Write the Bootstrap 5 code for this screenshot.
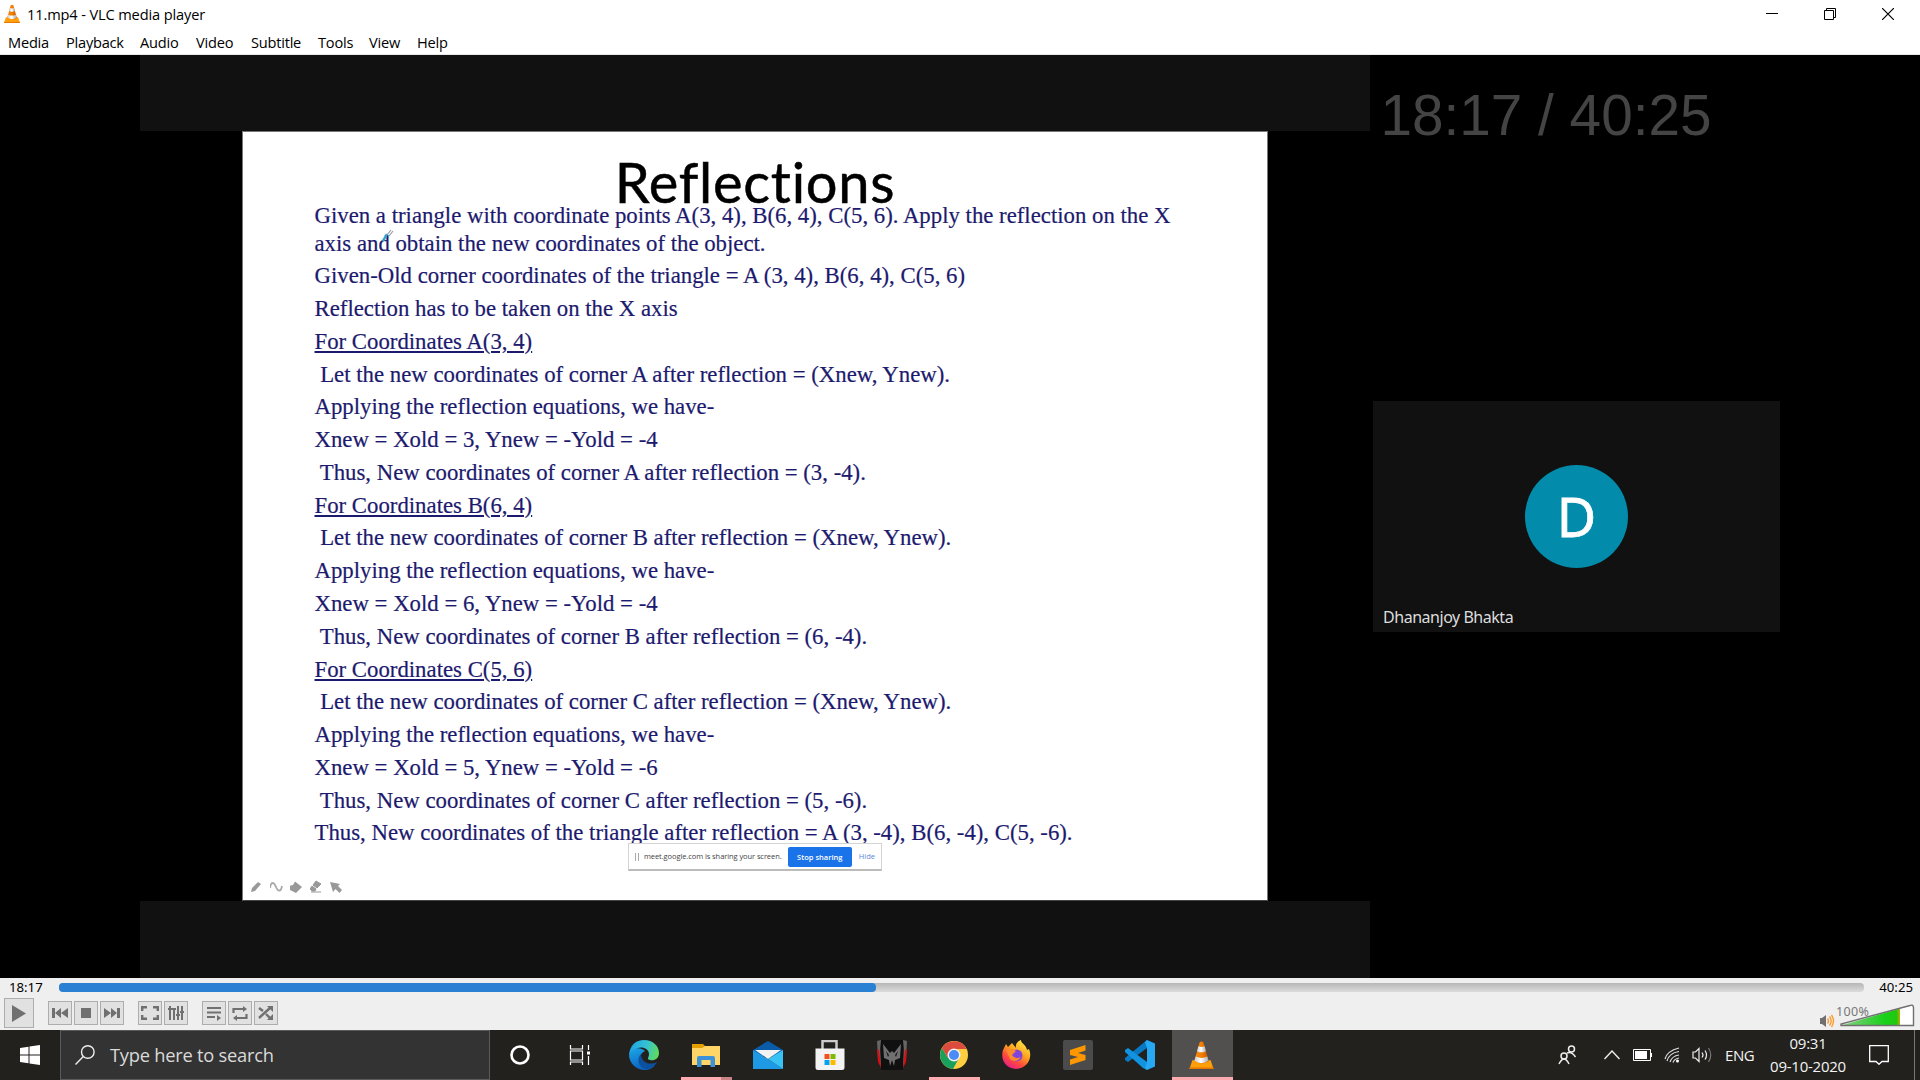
<!DOCTYPE html>
<html lang="en">
<head>
<meta charset="utf-8">
<title>11.mp4 - VLC media player</title>
<link href="https://cdn.jsdelivr.net/npm/bootstrap@5.3.0/dist/css/bootstrap.min.css" rel="stylesheet">
<style>
body{width:1920px;height:1080px;overflow:hidden;background:#fff;color:#000;font-family:"Open Sans","Noto Sans",sans-serif;font-size:15px}
svg{display:block;flex:none}
.titlebar{height:28px;padding-left:3px}
.titlebar .caption{margin-left:6px;font-size:14.6px;letter-spacing:-.13px;line-height:28px}
.win-controls{gap:46px;padding-right:26px}
.menubar{height:27px;border-bottom:1px solid #e9e9e9;padding-left:8px}
.menubar a{color:#000;text-decoration:none;font-size:14.6px;line-height:29px;height:26px;letter-spacing:-.22px;white-space:nowrap}
.video{height:923px;background:#000}
.share{width:1230px;margin-left:140px}
.band{height:76px;background:#111}
.band.lower{height:77px}
.slide{width:1026px;height:770px;margin-left:102px;background:#fff;border:1px solid #777;border-bottom-color:#444;overflow:hidden}
.slide-title{font-family:Lato,Carlito,sans-serif;font-size:56px;line-height:70px;height:70px;text-align:center;margin-top:15px;font-variant-ligatures:none;letter-spacing:.75px;-webkit-text-stroke:.5px #000}
.notes{font-family:"Liberation Serif",serif;font-size:22.79px;color:#1c1a6e;-webkit-text-stroke:.2px #1c1a6e;padding-left:71.5px;margin-top:-14.7px;white-space:pre}
.notes p{margin:0;line-height:32.77px;height:32.77px}
.notes p.intro{line-height:27.5px;height:58px}
.cursor-pen{left:382px;top:229px}
.sharebar{left:628px;top:843px;width:254px;height:28px;background:#fff;border:1px solid #d4d4d4;border-bottom:2px solid #bbb;font-size:7.5px;color:#444;padding:0 6px}
.sharebar .grip{width:4px;height:8px;border-left:1px solid #aaa;border-right:1px solid #aaa}
.sharebar .stop{width:65px;height:20px;background:#1a73e8;color:#fff;border-radius:2px;font-weight:600;line-height:20px;text-align:center}
.tools{left:250px;top:880px;gap:7px}
.side{padding-left:3px}
.osd{font-family:"Liberation Sans",sans-serif;font-size:56.7px;line-height:64px;color:#444;margin:29px 0 0 7.500px;height:64px;white-space:nowrap}
.tile{width:407px;height:231px;background:#111;margin-top:253px}
.avatar{width:103px;height:103px;border-radius:50%;background:#028baa;color:#fff;font-family:"Noto Sans",sans-serif;font-size:54px;line-height:102px;text-align:center;left:152px;top:64px;-webkit-text-stroke:.8px #fff}
.peer{left:10px;bottom:3px;color:#ddd;font-family:"Noto Sans",sans-serif;font-size:16px;line-height:24px;white-space:nowrap;letter-spacing:-.47px}
.controls{height:52px;background:#efefef;font-size:12.5px}
.seekrow{height:18px;padding:0 7px 0 9px}
.seekrow span{width:50px;line-height:18px;font-family:"Noto Sans",sans-serif;font-size:13.2px}
.seek{height:9px;background:linear-gradient(#b6b6b6,#dcdcdc);border-radius:4px;width:1805px;overflow:hidden;flex:none}
.seek div{height:100%;background:#2a80d2;border-radius:0 4px 4px 0}
.buttons{height:34px;padding-left:4px}
.ctl{width:24px;height:24px;background:#e1e1e1;border:1px solid #adadad;display:flex;align-items:center;justify-content:center;margin-right:2px}
.ctl.big{width:30px;height:30px;margin-right:14px}
.ctl.gap-after{margin-right:14px}
.volume{width:100px;height:34px}
.taskbar{height:50px;background:#22211e;color:#f4f4f4}
.start{width:60px}
.searchbox{width:430px;background:#333;border:1px solid #5a5a5a;padding-left:14px;color:#dadada}
.searchbox span{font-size:18.3px;letter-spacing:-.24px;margin-left:15px}
.task{width:60px;height:50px;display:flex;align-items:center;justify-content:center}
.app{width:62px;height:50px;display:flex;align-items:center;justify-content:center;position:relative}
.app.open::after{content:"";position:absolute;left:6px;width:51px;bottom:0;height:3px;background:#ffabb0}
.app.multi::after{background:linear-gradient(90deg,#ffabb0 40px,#c98488 40px)}
.app.active{background:#51504e;width:61px;margin-left:1px}
.app.active::after{left:0;width:61px}
.clock{width:80px;text-align:center;font-size:15px;line-height:23px;letter-spacing:-.25px;white-space:nowrap}
</style>
</head>
<body class="d-flex flex-column">
<svg width="0" height="0" class="position-absolute">
  <defs>
    <linearGradient id="coneG" x1="0" x2="1"><stop offset="0" stop-color="#f58a1c"/><stop offset=".5" stop-color="#f57f00"/><stop offset="1" stop-color="#c95400"/></linearGradient>
    <linearGradient id="wh" x1="0" x2="1"><stop offset="0" stop-color="#ccc"/><stop offset=".45" stop-color="#fff"/><stop offset="1" stop-color="#aaa"/></linearGradient>
    <symbol id="cone" viewBox="0 0 28 30">
      <path d="M4.500 20H23.500L26.500 29H1.500Z" fill="#ff9f0a"/><path d="M1.800 27.500H26.200L26.500 29H1.500Z" fill="#e87700"/>
      <path d="M12 1.500Q14-.5 16 1.500L21.500 21Q14 26 6.500 21Z" fill="url(#coneG)"/>
      <path d="M10.800 5.500Q14 7 17.200 5.500L18.600 10.500Q14 13 9.400 10.500Z" fill="url(#wh)"/>
      <path d="M8 16Q14 19 20 16L21.300 20.500Q14 25.500 6.700 20.500Z" fill="url(#wh)"/>
    </symbol>
    <linearGradient id="edgeA" x1="0" y1=".3" x2="1" y2=".5"><stop offset="0" stop-color="#1da4e4"/><stop offset=".55" stop-color="#35c1d5"/><stop offset="1" stop-color="#5fdb5b"/></linearGradient>
    <linearGradient id="edgeB" x1="0" y1="0" x2=".4" y2="1"><stop offset="0" stop-color="#1ca7e8"/><stop offset="1" stop-color="#0b62bd"/></linearGradient>
    <linearGradient id="ff" x1=".8" y1="0" x2=".2" y2="1"><stop offset="0" stop-color="#fff04a"/><stop offset=".4" stop-color="#ffa51f"/><stop offset=".7" stop-color="#ff473f"/><stop offset="1" stop-color="#e01795"/></linearGradient>
    <linearGradient id="vol" x1="0" x2="1"><stop offset="0" stop-color="#8ad08a"/><stop offset=".75" stop-color="#18d018"/><stop offset=".94" stop-color="#22c810"/><stop offset="1" stop-color="#b5b000"/></linearGradient>
  </defs>
</svg>

<header class="titlebar d-flex align-items-center">
  <svg width="18" height="20"><use href="#cone"/></svg>
  <span class="caption">11.mp4 - VLC media player</span>
  <div class="win-controls d-flex align-items-center ms-auto">
    <svg width="12" height="12"><path d="M0 5.500H12" stroke="#000"/></svg>
    <svg width="12" height="12" fill="none" stroke="#000"><path d="M.5 2.500H9.500V11.500H.5ZM2.500 2.500V.5H11.500V9.500H9.500"/></svg>
    <svg width="12" height="12"><path d="M0 0L12 12M12 0L0 12" stroke="#000" stroke-width="1.200"/></svg>
  </div>
</header>
<nav class="menubar d-flex">
  <a href="#" style="width:58px">Media</a><a href="#" style="width:74px">Playback</a><a href="#" style="width:56px">Audio</a><a href="#" style="width:55px">Video</a><a href="#" style="width:67px">Subtitle</a><a href="#" style="width:51px">Tools</a><a href="#" style="width:48px">View</a><a href="#">Help</a>
</nav>

<main class="video d-flex">
  <section class="share">
    <div class="band"></div>
    <div class="slide">
      <div class="slide-title">Reflections</div>
      <div class="notes"><p class="intro">Given a triangle with coordinate points A(3, 4), B(6, 4), C(5, 6). Apply the reflection on the X
axis and obtain the new coordinates of the object.</p><p>Given-Old corner coordinates of the triangle = A (3, 4), B(6, 4), C(5, 6)</p><p>Reflection has to be taken on the X axis</p><p><u>For Coordinates A(3, 4)</u></p><p> Let the new coordinates of corner A after reflection = (Xnew, Ynew).</p><p>Applying the reflection equations, we have-</p><p>Xnew = Xold = 3, Ynew = -Yold = -4</p><p> Thus, New coordinates of corner A after reflection = (3, -4).</p><p><u>For Coordinates B(6, 4)</u></p><p> Let the new coordinates of corner B after reflection = (Xnew, Ynew).</p><p>Applying the reflection equations, we have-</p><p>Xnew = Xold = 6, Ynew = -Yold = -4</p><p> Thus, New coordinates of corner B after reflection = (6, -4).</p><p><u>For Coordinates C(5, 6)</u></p><p> Let the new coordinates of corner C after reflection = (Xnew, Ynew).</p><p>Applying the reflection equations, we have-</p><p>Xnew = Xold = 5, Ynew = -Yold = -6</p><p> Thus, New coordinates of corner C after reflection = (5, -6).</p><p>Thus, New coordinates of the triangle after reflection = A (3, -4), B(6, -4), C(5, -6).</p></div>
    </div>
    <div class="band lower"></div>
  </section>
  <aside class="side">
    <div class="osd">18:17 / 40:25</div>
    <div class="tile position-relative">
      <div class="avatar position-absolute">D</div>
      <div class="peer position-absolute">Dhananjoy Bhakta</div>
    </div>
  </aside>
</main>
<svg class="cursor-pen position-absolute" width="12" height="13" fill="none"><path d="M1 12L5 5" stroke="#2fa6cf" stroke-width="2.500"/><path d="M5 6L9 1M7 7L11 2" stroke="#99a" stroke-width="1.200"/></svg>
<div class="sharebar position-absolute d-flex align-items-center">
  <div class="grip"></div><span style="margin-left:5px;width:146px;white-space:nowrap;letter-spacing:-.08px">meet.google.com is sharing your screen.</span>
  <div class="stop">Stop sharing</div><span style="margin-left:7px;color:#5b86d6">Hide</span>
</div>
<div class="tools position-absolute d-flex">
  <svg width="13" height="14" viewBox="0 0 13 14"><path d="M1 12L2 8L8 2L11 4L5 11Z" fill="#999"/></svg>
  <svg width="13" height="14" viewBox="0 0 13 14"><path d="M0 8C1 1 4 2 6 7S11 12 12 6" fill="none" stroke="#aaa" stroke-width="1.800"/></svg>
  <svg width="13" height="14" viewBox="0 0 13 14"><path d="M-1 6L3 5L5 1.500L12 7L10 9L6 13L0 10Z" fill="#999"/></svg>
  <svg width="13" height="14" viewBox="0 0 13 14"><path d="M3 5L6 1L11 4L7 8ZM2 6L6 9L5 11H2L0 9ZM1 12H11" fill="#999" stroke="#999"/></svg>
  <svg width="13" height="14" viewBox="0 0 13 14"><path d="M0 2L10 4L8 6L12 10L9.500 13L5.500 9L3 12Z" fill="#999"/></svg>
</div>

<section class="controls">
  <div class="seekrow d-flex align-items-center">
    <span>18:17</span><div class="seek"><div style="width:45.3%"></div></div><span class="text-end ms-auto">40:25</span>
  </div>
  <div class="buttons d-flex align-items-center">
    <div class="ctl big"><svg width="14" height="17"><path d="M0 0L14 8.500L0 17Z" fill="#707070"/></svg></div>
    <div class="ctl"><svg width="16" height="12" fill="#707070"><path d="M0 1H3V11H0ZM3 6L9 1V11ZM9 6L16 1V11Z"/></svg></div>
    <div class="ctl"><svg width="10" height="10"><path d="M0 0H10V10H0Z" fill="#707070"/></svg></div>
    <div class="ctl gap-after"><svg width="16" height="12" fill="#707070"><path d="M16 1H13V11H16ZM13 6L7 1V11ZM7 6L0 1V11Z"/></svg></div>
    <div class="ctl"><svg width="18" height="14" fill="none" stroke="#707070" stroke-width="2.400"><path d="M1.200 5V1.200H6M12 1.200H16.800V5M16.800 9V12.800H12M6 12.800H1.200V9"/></svg></div>
    <div class="ctl gap-after"><svg width="16" height="14" fill="none" stroke="#707070" stroke-width="2"><path d="M2 0V14M6 3V14M10 0V14M14 0V14M0 3H4M4 3H8M8 9H12M12 6H16"/></svg></div>
    <div class="ctl"><svg width="16" height="15" fill="none" stroke="#707070" stroke-width="2"><path d="M1 2H15M1 6.500H15M1 11H9" /><path d="M11 9V15L15 12Z" fill="#707070" stroke="none"/></svg></div>
    <div class="ctl"><svg width="16" height="15" fill="none" stroke="#707070" stroke-width="2.200"><path d="M1.500 7V3H11M14.500 8V12H5"/><path d="M11 0L15 3L11 6ZM5 9L1 12L5 15Z" fill="#707070" stroke="none"/></svg></div>
    <div class="ctl"><svg width="16" height="14" fill="none" stroke="#707070" stroke-width="2.400"><path d="M1 2L5 5M8 8L12 12M1 12L12 2"/><path d="M9 0H15V6ZM15 8V14H9Z" fill="#707070" stroke="none"/></svg></div>
    <svg class="volume ms-auto" viewBox="0 0 100 34" font-family="Noto Sans">
      <path d="M0 22H2L6 19V31L2 28H0Z" fill="#707070"/><path d="M7.500 22.500Q9.500 25 7.500 27.500M9.500 20.500Q13 25 9.500 29.500M11.500 19Q15.500 25 11.500 31" fill="none" stroke="#ff9b2e" stroke-width="1.400"/>
      <path d="M21 29.500L80 12.500V29.500Z" fill="url(#vol)"/><path d="M80 12.500L94 9V29.500H80Z" fill="#fff"/>
      <path d="M21 29.500V28L90 9.500Q93.500 8 93.500 12V29.500Z" fill="none" stroke="#707070" stroke-width="1.400"/>
      <text x="16" y="19.500" font-size="12.500" fill="#777" textLength="33">100%</text>
    </svg>
  </div>
</section>

<footer class="taskbar d-flex">
  <div class="start d-flex align-items-center justify-content-center"><svg width="20" height="20" fill="#fff"><path d="M0 3L8.500 1.800V9.400H0ZM9.500 1.600L20 0V9.400H9.500ZM0 10.400H8.500V18.200L0 17ZM9.500 10.400H20V20L9.500 18.400Z"/></svg></div>
  <div class="searchbox d-flex align-items-center"><svg width="20" height="20" fill="none" stroke="#eee" stroke-width="1.400"><circle cx="12.800" cy="7" r="6.300"/><path d="M8.300 11.500L.5 19.500"/></svg><span>Type here to search</span></div>
  <div class="task"><svg width="20" height="20"><circle cx="10" cy="10" r="8.500" fill="none" stroke="#fff" stroke-width="2.600"/></svg></div>
  <div class="task" style="width:63px"><svg style="margin-right:3px" width="22" height="20" fill="none" stroke="#fff" stroke-width="1.200"><path d="M1.500 0V4H13.500V0M1.500 6H13.500V15H1.500ZM1.500 20V17H13.500V20M19.500 0V5M19.500 11V20"/><path d="M18 6.500H21V9.500H18Z" fill="#fff" stroke="none"/></svg></div>
  <div class="app"><svg width="30" height="30"><path d="M0 15C1 5 7 0 15 0C24 0 30 6 30 13C30 19 25 21 21 20C17 19 20 18 20 14C20 8 11 5 5 10Z" fill="url(#edgeA)"/><path d="M0 16C1 8 11 6 16 11C11 13 9 20 13 25C17 29 23 27 26 25C20 34 2 31 0 16Z" fill="url(#edgeB)"/><path d="M12 14C7 19 10 29 18 29C22 29 26 26 28 22C20 26 12 22 12 14Z" fill="#0c50a0"/></svg></div>
  <div class="app open multi"><svg width="28" height="24"><path d="M0 1H11L14 4H28V22H0Z" fill="#e5a000"/><path d="M0 5H10L13 3H28V22H0Z" fill="#ffd567"/><path d="M5 24V15Q5 13 7 13H21Q23 13 23 15V24H18.500V17H9.500V24Z" fill="#3e92d8"/></svg></div>
  <div class="app"><svg width="30" height="28"><path d="M0 9L15 0L30 9V15H0Z" fill="#0a5ca8"/><path d="M0 9L15 18L30 28H0Z" fill="#1e9ae4"/><path d="M30 9V28L15 18Z" fill="#38c2f5"/><path d="M2 9H28L15 18Z" fill="#f2f2f2"/></svg></div>
  <div class="app"><svg width="30" height="30"><path d="M7.500 10V1H21.500V10" fill="none" stroke="#ccc" stroke-width="2.500"/><path d="M.5 8.500H29.500V28Q29.500 30 27 30H3Q.5 30 .5 28Z" fill="#f3f3f3"/><path d="M9.500 14H14.500V19H9.500Z" fill="#f25022"/><path d="M15.500 14H20.500V19H15.500Z" fill="#7fba00"/><path d="M9.500 20H14.500V25H9.500Z" fill="#00a4ef"/><path d="M15.500 20H20.500V25H15.500Z" fill="#ffb900"/></svg></div>
  <div class="app"><svg width="30" height="30"><path d="M4 0H26V30H4Z" fill="#101010"/><path d="M0 1L4 0L3 9L4 27L1 18ZM30 1L26 0L27 9L26 27L29 18Z" fill="#666"/><path d="M0 9L2 10L4 28L1 22ZM30 9L28 10L26 28L29 22Z" fill="#d90d12"/><path d="M6 4L13 13L15 11L17 13L24 4L23 18L18 20L17 26L15 20L13 26L12 20L7 18Z" fill="#707070"/><path d="M9 11L12 15L11 17ZM21 11L18 15L19 17Z" fill="#151515"/></svg></div>
  <div class="app open"><svg width="28" height="28"><circle cx="14" cy="14" r="14" fill="#ffcd40"/><path d="M14 14L8 17L2 7A14 14 0 0 0 13 28L19 17Z" fill="#18a05d"/><path d="M2 7A14 14 0 0 1 26.500 8H14L8 17Z" fill="#dc4b3e"/><circle cx="14" cy="14" r="6.500" fill="#f1f1f1"/><circle cx="14" cy="14" r="5" fill="#4a8bf5"/></svg></div>
  <div class="app"><svg width="29" height="30"><path d="M1 10L4 4L6 7L10 3L14 8C13 4 16 1 19 0C19 4 24 4 25 10L27 9C31 18 25 29 14 29C4 29-2 20 1 10Z" fill="url(#ff)"/><circle cx="14.500" cy="15.500" r="6" fill="#8245dc"/><path d="M4 10Q8 7 14 11L10 15Q13 20 19 17Q14 24 8 19Z" fill="#ff8b2b"/></svg></div>
  <div class="app"><svg width="30" height="30"><rect width="30" height="30" rx="2" fill="#4b4b4b"/><path d="M7 10L22.500 5V10.500L15 13L22.500 15V20L7 25V19.500L15 17L7 15Z" fill="#ff9800"/></svg></div>
  <div class="app"><svg width="30" height="30"><path d="M22 8L3 22L0 20V18L22 0Z" fill="#0879c5"/><path d="M22 22L3 8L0 10V12L18 28L22 30Z" fill="#1193df"/><path d="M22 0L30 3.500V26.500L22 30L20 28L22 22V8L20 2Z" fill="#26a8f3"/></svg></div>
  <div class="app open active"><svg style="margin-right:2px" width="27" height="29"><use href="#cone"/></svg></div>
  <div class="d-flex align-items-center ms-auto" style="width:362px">
    <svg width="19" height="20" viewBox="0 0 19 20" fill="none" stroke="#eee" stroke-width="1.500"><circle cx="13.500" cy="4" r="3"/><circle cx="6" cy="11" r="3"/><path d="M9 8Q13.500 6 17.500 12M1 19Q6 9 11 19"/></svg>
    <svg style="margin-left:27px" width="16" height="10" fill="none" stroke="#eee" stroke-width="1.400"><path d="M.5 9L8 1L15.500 9"/></svg>
    <svg style="margin-left:13px" width="19" height="12"><path d="M.5.500H17.500V11.500H.5Z" fill="none" stroke="#fff"/><path d="M2 2H14V10H2ZM18 4H19V8H18Z" fill="#fff"/></svg>
    <svg style="margin-left:12px" width="16" height="16" fill="none" stroke="#ddd" stroke-width="1.200"><path d="M1 12Q3 4 15 1M3 14Q5 6 15 4.500M6 15Q8 9 15 8M9 15.500Q10 12 15 11"/><circle cx="13.500" cy="14" r="1.500" fill="#fff" stroke="none"/></svg>
    <svg style="margin-left:12px" width="21" height="18" fill="none" stroke="#eee" stroke-width="1.200"><path d="M1 6H3.500L7 2.500V15.500L3.500 12H1ZM10 6.500Q12 9 10 11.500M13 4.500Q16 9 13 13.500"/><path d="M16.500 2Q21 9 16.500 16" stroke="#777"/></svg>
    <span style="margin-left:12px;width:43px;font-size:15px;letter-spacing:-.4px">ENG</span>
    <div class="clock"><div>09:31</div><div>09-10-2020</div></div>
    <svg style="margin-left:21px" width="20" height="20" fill="none" stroke="#fff" stroke-width="1.300"><path d="M.7.700H19.300V16.500H13L10 19.300L7 16.500H.7Z"/></svg>
    <div style="margin-left:25px;width:1px;height:50px;background:#777"></div>
  </div>
</footer>
<script src="https://cdn.jsdelivr.net/npm/bootstrap@5.3.0/dist/js/bootstrap.bundle.min.js"></script>
</body>
</html>
